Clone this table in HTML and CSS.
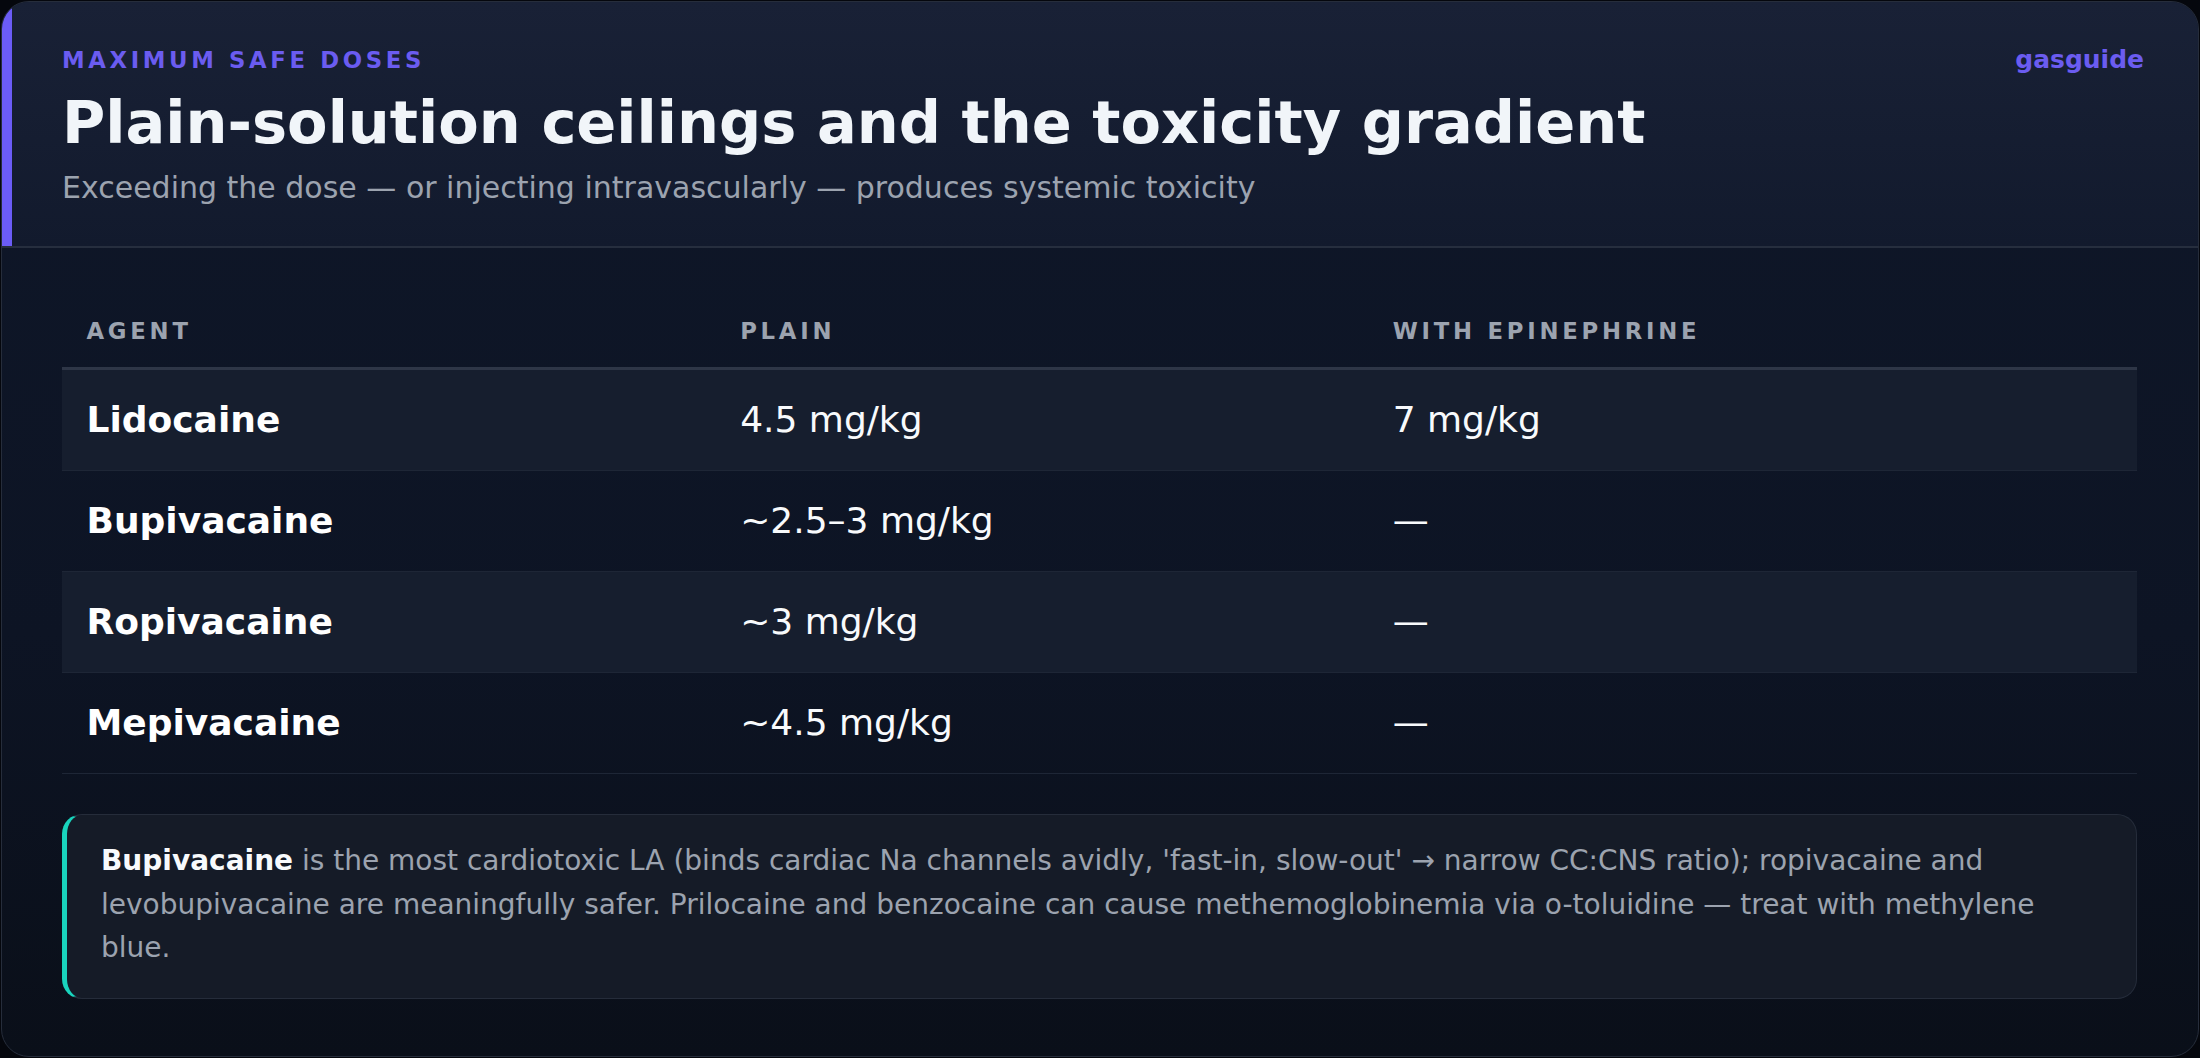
FILE: index.html
```html
<!DOCTYPE html>
<html lang="en">
<head>
<meta charset="utf-8">
<title>Maximum safe doses</title>
<link rel="stylesheet" href="styles.css">
</head>
<body>
<main class="card">
  <header class="card-header">
    <div class="heading">
      <div class="eyebrow">Maximum safe doses</div>
      <h1 class="title">Plain-solution ceilings and the toxicity gradient</h1>
      <p class="subtitle">Exceeding the dose — or injecting intravascularly — produces systemic toxicity</p>
    </div>
    <div class="brand">gasguide</div>
  </header>
  <section class="card-body">
    <table class="doses">
      <thead>
        <tr><th class="col-agent">Agent</th><th class="col-plain">Plain</th><th>With epinephrine</th></tr>
      </thead>
      <tbody>
        <tr><td class="agent">Lidocaine</td><td>4.5 mg/kg</td><td>7 mg/kg</td></tr>
        <tr><td class="agent">Bupivacaine</td><td>~2.5–3 mg/kg</td><td>—</td></tr>
        <tr><td class="agent">Ropivacaine</td><td>~3 mg/kg</td><td>—</td></tr>
        <tr><td class="agent">Mepivacaine</td><td>~4.5 mg/kg</td><td>—</td></tr>
      </tbody>
    </table>
    <div class="callout">
      <p><strong>Bupivacaine</strong> is the most cardiotoxic LA (binds cardiac Na channels avidly, 'fast-in, slow-out' → narrow CC:CNS ratio); ropivacaine and levobupivacaine are meaningfully safer. Prilocaine and benzocaine can cause methemoglobinemia via o-toluidine — treat with methylene blue.</p>
    </div>
  </section>
</main>
</body>
</html>
```

FILE: styles.css
```css
* { box-sizing: border-box; }

html, body {
  margin: 0;
  background: #05070d;
}

body {
  padding: 1px;
  height: 1058px;
  font-family: "DejaVu Sans", "Noto Sans", sans-serif;
  color: #f1f5f9;
}

.card {
  height: 1056px;
  border: 1px solid #262d3b;
  border-radius: 28px;
  overflow: hidden;
  background: linear-gradient(180deg, #0f1729 0%, #0d1424 60%, #0a0f19 100%);
  display: flex;
  flex-direction: column;
}

.card-header {
  position: relative;
  display: flex;
  justify-content: space-between;
  align-items: flex-start;
  padding: 45px 54px 37px 60px;
  background: linear-gradient(180deg, #192136 0%, #121a2d 100%);
  border-bottom: 2px solid #262e3e;
}

.card-header::before {
  content: "";
  position: absolute;
  left: 0;
  top: 0;
  bottom: 0;
  width: 10px;
  background: #6b5cf6;
}

.heading {
  display: flex;
  flex-direction: column;
}

.eyebrow {
  font-size: 22.75px;
  line-height: 27px;
  font-weight: 700;
  letter-spacing: 0.16em;
  text-transform: uppercase;
  color: #6b5cf0;
}

.title {
  margin: 14px 0 0;
  font-size: 59px;
  line-height: 70px;
  font-weight: 700;
  color: #f1f5f9;
}

.subtitle {
  margin: 9px 0 0;
  font-size: 30px;
  line-height: 42px;
  color: #9ca3af;
}

.brand {
  font-size: 25px;
  line-height: 30px;
  font-weight: 700;
  color: #6b5cf0;
  margin-top: -2px;
}

.card-body {
  padding: 43px 61px 0 60px;
  display: flex;
  flex-direction: column;
}

.doses {
  width: 100%;
  border-collapse: collapse;
  table-layout: fixed;
}

.col-agent { width: 31.5%; }
.col-plain { width: 31.45%; }

.doses th {
  text-align: left;
  padding: 23px 24.5px 19px;
  font-size: 22.75px;
  line-height: 34px;
  font-weight: 700;
  letter-spacing: 0.165em;
  text-transform: uppercase;
  color: #9ca3af;
  border-bottom: 3px solid #2e3647;
}

.doses td {
  padding: 24px 24.5px;
  font-size: 36px;
  line-height: 52px;
  color: #f8fafc;
  border-bottom: 1px solid #1e2636;
}

.doses tbody tr:nth-child(odd) td {
  background: #161e2e;
}

.doses td.agent {
  font-weight: 700;
  color: #ffffff;
}

.callout {
  margin-top: 40px;
  border: 1px solid #252c3a;
  border-left: 5px solid #19d4bd;
  border-radius: 20px;
  background: #151b27;
  padding: 24px 35px 28px 34px;
}

.callout p {
  margin: 0;
  font-size: 28px;
  line-height: 43.5px;
  color: #9ca3af;
}

.callout strong {
  color: #f8fafc;
  font-weight: 700;
}
```
